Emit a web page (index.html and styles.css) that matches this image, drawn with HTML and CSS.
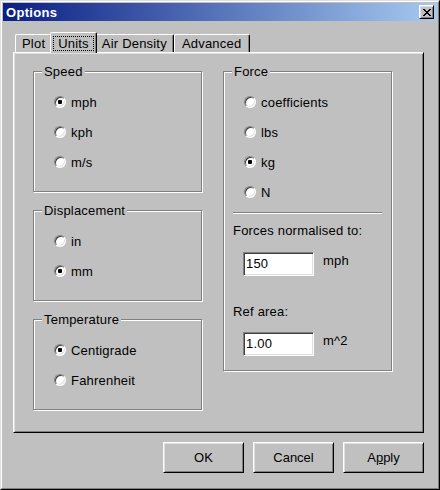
FILE: index.html
```html
<!DOCTYPE html>
<html lang="en">

<head>
  <meta charset="UTF-8">
  <title>Options</title>
  <link rel="stylesheet" href="styles.css">
</head>

<body>
  <div class="window">
    <div class="frame">
      <div class="titlebar">
        <span class="title">Options</span>
        <button class="close-btn" aria-label="Close">
          <svg width="8" height="7" viewBox="0 0 8 7" shape-rendering="crispEdges">
            <path d="M0 0h2v1h-2zM6 0h2v1h-2zM1 1h2v1h-2zM5 1h2v1h-2zM2 2h4v1h-4zM3 3h2v1h-2zM2 4h4v1h-4zM1 5h2v1h-2zM5 5h2v1h-2zM0 6h2v1h-2zM6 6h2v1h-2z" />
          </svg>
        </button>
      </div>

      <div class="dialog">
        <div class="tabs">
          <div class="tab">Plot</div>
          <div class="tab active"><span class="focus">Units</span></div>
          <div class="tab">Air Density</div>
          <div class="tab">Advanced</div>
        </div>

        <div class="panel">
          <div class="col">
            <div class="group">
              <div class="group-title">Speed</div>
              <div class="option"><span class="radio checked"></span>mph</div>
              <div class="option"><span class="radio"></span>kph</div>
              <div class="option"><span class="radio"></span>m/s</div>
            </div>
            <div class="group">
              <div class="group-title">Displacement</div>
              <div class="option"><span class="radio"></span>in</div>
              <div class="option"><span class="radio checked"></span>mm</div>
            </div>
            <div class="group">
              <div class="group-title">Temperature</div>
              <div class="option"><span class="radio checked"></span>Centigrade</div>
              <div class="option"><span class="radio"></span>Fahrenheit</div>
            </div>
          </div>

          <div class="col">
            <div class="group">
              <div class="group-title">Force</div>
              <div class="option"><span class="radio"></span>coefficients</div>
              <div class="option"><span class="radio"></span>lbs</div>
              <div class="option"><span class="radio checked"></span>kg</div>
              <div class="option"><span class="radio"></span>N</div>
              <div class="sep"></div>
              <div class="field-label">Forces normalised to:</div>
              <div class="field-row">
                <div class="input">150</div>
                <span class="unit">mph</span>
              </div>
              <div class="field-label spaced">Ref area:</div>
              <div class="field-row tight">
                <div class="input">1.00</div>
                <span class="unit">m^2</span>
              </div>
            </div>
          </div>
        </div>

        <div class="buttons">
          <button class="btn">OK</button>
          <button class="btn">Cancel</button>
          <button class="btn">A<u>p</u>ply</button>
        </div>
      </div>
    </div>
  </div>
</body>

</html>
```

FILE: styles.css
```css
* {
  box-sizing: border-box;
}

body {
  margin: 0;
  background-color: #c0c0c0;
  font-family: "Liberation Sans", Arial, sans-serif;
  font-size: 13px;
  line-height: 15px;
  letter-spacing: 0.2px;
  color: #000;
}

.window {
  width: 440px;
  height: 490px;
  border: 1px solid;
  border-color: #dfdfdf #000 #000 #dfdfdf;
}

.frame {
  height: 100%;
  border: 1px solid;
  border-color: #fff #808080 #808080 #fff;
  padding: 1px;
}

.titlebar {
  height: 18px;
  display: flex;
  align-items: center;
  justify-content: space-between;
  padding: 0 3px 0 3px;
  background: linear-gradient(to right, #0a1e84, #a6caf0);
}

.title {
  color: white;
  font-weight: bold;
  letter-spacing: 0.3px;
}

.close-btn {
  width: 15px;
  height: 14px;
  padding: 0;
  display: flex;
  align-items: center;
  justify-content: center;
  background-color: #c0c0c0;
  border: 1px solid;
  border-color: #fff #000 #000 #fff;
  box-shadow: inset 1px 1px #dfdfdf, inset -1px -1px #808080;
}

.dialog {
  padding: 11px 13px 0 10px;
}

/* tab strip */
.tabs {
  display: flex;
  align-items: flex-end;
  height: 20px;
  padding-left: 2px;
}

.tab {
  height: 18px;
  padding: 1px 6px 0;
  border: 1px solid;
  border-bottom: 0;
  border-color: #fff #000 transparent #fff;
  border-radius: 2px 2px 0 0;
  box-shadow: inset -1px 0 #808080;
  white-space: nowrap;
}

.tab:last-child {
  padding: 1px 8px 0 7px;
}

.tab.active {
  position: relative;
  height: 21px;
  margin: 0 -2px -1px;
  padding: 3px 2px 0;
  background-color: #c0c0c0;
}

.focus {
  display: inline-block;
  line-height: 13px;
  padding: 0 4px;
  border: 1px dotted #000;
}

/* page */
.panel {
  height: 381px;
  border: 1px solid;
  border-color: #fff #000 #000 #fff;
  box-shadow: inset 1px 1px #dfdfdf, inset -1px -1px #808080;
  padding: 18px 0 0 19px;
  display: grid;
  grid-template-columns: 169px 169px;
  column-gap: 21px;
  align-items: start;
}

.col {
  display: flex;
  flex-direction: column;
  gap: 18px;
}

.group {
  border: 1px solid #808080;
  box-shadow: 1px 1px 0 #fff, inset 1px 1px 0 #fff;
  padding-bottom: 14px;
}

.group-title {
  display: table;
  margin: -8px 0 8px 8px;
  padding: 0 2px;
  background-color: #c0c0c0;
}

.option {
  display: flex;
  align-items: center;
  height: 30px;
  padding-left: 20px;
}

.radio {
  position: relative;
  flex: none;
  width: 12px;
  height: 12px;
  margin-right: 5px;
  border-radius: 50%;
  background-color: #fff;
  border: 1px solid;
  border-color: #808080 #fff #fff #808080;
  box-shadow: inset 1px 1px #404040, inset -1px -1px #dfdfdf;
}

.radio.checked::after {
  content: "";
  position: absolute;
  left: 3px;
  top: 3px;
  width: 4px;
  height: 4px;
  border-radius: 1px;
  background-color: #000;
}

.sep {
  margin: 5px 9px 0;
  border-top: 1px solid #808080;
  border-bottom: 1px solid #fff;
}

.field-label {
  margin: 9px 0 0 9px;
}

.field-label.spaced {
  margin-top: 28px;
}

.field-row {
  display: flex;
  align-items: flex-start;
  margin: 14px 0 0 19px;
}

.field-row.tight {
  margin-top: 13px;
}

.input {
  width: 71px;
  height: 24px;
  padding: 3px 0 0 2px;
  background-color: #fff;
  border: 1px solid;
  border-color: #808080 #fff #fff #808080;
  box-shadow: inset 1px 1px #404040, inset -1px -1px #dfdfdf;
}

.unit {
  margin: 1px 0 0 9px;
}

/* dialog buttons */
.buttons {
  display: flex;
  justify-content: flex-end;
  gap: 9px;
  margin-top: 9px;
}

.btn {
  width: 81px;
  height: 31px;
  padding: 0;
  font: inherit;
  color: #000;
  background-color: #c0c0c0;
  border: 1px solid;
  border-color: #fff #000 #000 #fff;
  box-shadow: inset 1px 1px #dfdfdf, inset -1px -1px #808080;
}

.btn u {
  text-decoration-thickness: 1px;
}
```
